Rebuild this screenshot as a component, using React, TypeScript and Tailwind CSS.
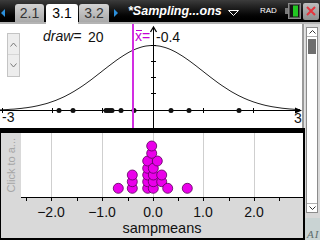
const curve = (() => {
  const pts: string[] = [];
  for (let x = 0; x <= 300; x += 2) {
    const u = (x - 152.5) / 50.2;
    const y = 110.5 - 65 * Math.exp((-u * u) / 2);
    pts.push(`${x},${y.toFixed(1)}`);
  }
  return 'M' + pts.join(' L');
})();

const sampleDots = [59, 73, 106, 108, 110, 112, 121, 134, 171, 189, 239];

const meanDots: [number, number][] = [
  [118.3, 188.3],
  [132.3, 188.3],
  [132.3, 181.7],
  [132.3, 175],
  [147.7, 188.3],
  [147.7, 181.7],
  [147.7, 175],
  [147.7, 168.3],
  [147.7, 161],
  [153.3, 188.3],
  [153.3, 181.7],
  [153.3, 175],
  [153.3, 168.3],
  [157.3, 161],
  [151.7, 153.3],
  [151.7, 146],
  [161.7, 181.7],
  [161.7, 175],
  [167.7, 188.3],
  [187.3, 188.3],
];

const axisLabels: [number, string][] = [
  [51, '\u22122.0'],
  [102, '\u22121.0'],
  [153, '0.0'],
  [203, '1.0'],
  [254, '2.0'],
];

function TopBar() {
  return (
    <div className="h-[24px] flex items-end bg-gradient-to-b from-[#3c3c3c] via-[#141414] to-black border-b-2 border-[#b4b4b4]">
      <div className="w-[15px] shrink-0 self-stretch flex items-center pl-[1px] pt-[4px]">
        <svg width="4" height="8" viewBox="0 0 4 8">
          <polygon points="4,0 0,4 4,8" fill="#2b8fdc" />
        </svg>
      </div>
      <div className="w-[29px] shrink-0 h-[18px] rounded-t-[3px] bg-gradient-to-b from-[#d4d4d4] to-[#a9a9a9] text-[14px] leading-[18px] text-center text-[#333]">
        2.1
      </div>
      <div className="ml-[2px] shrink-0 -mb-[2px] w-[32px] h-[20px] rounded-t-[3px] bg-white text-[14px] leading-[19px] text-center text-black">
        3.1
      </div>
      <div className="ml-[1px] shrink-0 w-[30px] h-[18px] rounded-t-[3px] bg-gradient-to-b from-[#d4d4d4] to-[#a9a9a9] text-[14px] leading-[18px] text-center text-[#333]">
        3.2
      </div>
      <div className="w-[19px] shrink-0 self-stretch flex items-center pl-[5px] pt-[4px]">
        <svg width="4" height="8" viewBox="0 0 4 8">
          <polygon points="0,0 4,4 0,8" fill="#2b8fdc" />
        </svg>
      </div>
      <div className="w-[112px] shrink-0 self-stretch flex items-center">
        <span className="text-white text-[12.5px] font-bold italic whitespace-nowrap">*Sampling...ons</span>
        <svg className="ml-[6px] mt-[3px] shrink-0" width="11" height="6" viewBox="0 0 11 6">
          <polygon points="0.5,0.5 10.5,0.5 5.5,5.5" fill="none" stroke="#ffffff" strokeWidth="1" />
        </svg>
      </div>
      <div className="ml-[20px] self-stretch flex items-center">
        <span className="w-[17px] shrink-0 text-white text-[8px] leading-none whitespace-nowrap">RAD</span>
        <svg className="ml-[8px] shrink-0" width="16" height="16" viewBox="0 0 16 16">
          <rect x="0" y="5" width="3" height="6" fill="#7a7a7a" />
          <rect x="3.5" y="0.5" width="12" height="15" fill="#555" stroke="#8a8a8a" />
          <rect x="5" y="2" width="9" height="12" fill="#151515" />
          <rect x="8" y="2.5" width="5" height="11" fill="#22c622" />
        </svg>
        <div className="ml-[2px] shrink-0 w-[16px] h-[17px] rounded-[2px] bg-gradient-to-b from-[#bdbdbd] to-[#8e8e8e] flex items-center justify-center">
          <svg width="10" height="10" viewBox="0 0 10 10">
            <path d="M1 1 L9 9 M9 1 L1 9" stroke="#e5343c" strokeWidth="2" />
          </svg>
        </div>
      </div>
    </div>
  );
}

function GraphPanel() {
  return (
    <div className="h-[104px] flex">
      <div className="relative w-[302px] h-full bg-white">
        <svg width="302" height="104" viewBox="0 24 302 104" className="block">
          <path d={curve} fill="none" stroke="#222" strokeWidth="1" />
          <line x1="0" y1="110.5" x2="298" y2="110.5" stroke="#000" strokeWidth="1" />
          <polygon points="295,107.5 302,110.5 295,113.5" fill="#000" />
          {[2, 52, 102, 203, 253].map((x) => (
            <line key={x} x1={x + 0.5} y1="108" x2={x + 0.5} y2="113" stroke="#000" strokeWidth="1" />
          ))}
          <line x1="153.5" y1="28" x2="153.5" y2="128" stroke="#000" strokeWidth="1" />
          <polyline points="150.5,32 153.5,27 156.5,32" fill="none" stroke="#000" strokeWidth="1.3" />
          {[45, 61, 77, 93].map((y) => (
            <line key={y} x1="151" y1={y + 0.5} x2="156" y2={y + 0.5} stroke="#000" strokeWidth="1" />
          ))}
          {sampleDots.map((x, i) => (
            <circle key={i} cx={x} cy="110.5" r="2.5" fill="#111" />
          ))}
          <rect x="132" y="24" width="2" height="104" fill="#d22ee2" />
          <text x="43" y="41" fontSize="14" fontStyle="italic" fill="#111">draw=</text>
          <text x="88" y="42" fontSize="14" fill="#111">20</text>
          <text x="135" y="41" fontSize="14" fill="#c400d4">x=</text>
          <line x1="136" y1="30.5" x2="142" y2="30.5" stroke="#c400d4" strokeWidth="1" />
          <text x="156" y="42" fontSize="14" fill="#111">-0.4</text>
          <text x="2" y="122" fontSize="14" fill="#111">-3</text>
          <text x="294" y="123" fontSize="14" fill="#111">3</text>
        </svg>
        <div className="absolute left-[7px] top-[9px] w-[13px] h-[44px] border border-[#c4c4c4] bg-[#ededed] flex flex-col">
          <div className="h-[21px] flex items-center justify-center border-b border-[#d6d6d6]">
            <svg width="7" height="5" viewBox="0 0 7 5">
              <polyline points="0.5,4.5 3.5,1 6.5,4.5" fill="none" stroke="#7a7a7a" strokeWidth="1" />
            </svg>
          </div>
          <div className="flex-1 flex items-center justify-center">
            <svg width="7" height="5" viewBox="0 0 7 5">
              <polyline points="0.5,0.5 3.5,4 6.5,0.5" fill="none" stroke="#7a7a7a" strokeWidth="1" />
            </svg>
          </div>
        </div>
      </div>
      <div className="w-[2px] bg-[#9a9a9a]" />
      <div className="w-[1px] bg-[#e2e2e2]" />
    </div>
  );
}

function DataPanel() {
  return (
    <div className="h-[107px] flex border-l border-r-2 border-b-2 border-black bg-[#d9d9d9]">
      <div className="w-[20px] flex flex-col items-center pt-[5px]">
        <span className="[writing-mode:vertical-rl] rotate-180 text-[11px] leading-none text-[#a6a6a6]">
          Click to a...
        </span>
      </div>
      <svg width="282" height="105" viewBox="21 133 282 105" className="block">
        <rect x="21" y="133" width="282" height="64" fill="#ffffff" />
        {[51, 102, 153, 203, 254].map((x) => (
          <line key={x} x1={x + 0.5} y1="133" x2={x + 0.5} y2="197" stroke="#cfcfcf" strokeWidth="1" />
        ))}
        <line x1="21" y1="197.5" x2="303" y2="197.5" stroke="#000" strokeWidth="1" />
        {[26, 51, 77, 102, 128, 153, 178, 203, 229, 254, 279].map((x) => (
          <line key={x} x1={x + 0.5} y1="197" x2={x + 0.5} y2="201" stroke="#000" strokeWidth="1" />
        ))}
        {meanDots.map(([x, y], i) => (
          <circle key={i} cx={x} cy={y} r="5" fill="#ea00ea" stroke="#5a005a" strokeWidth="0.8" />
        ))}
        {axisLabels.map(([x, t]) => (
          <text key={x} x={x} y="216.5" fontSize="14" textAnchor="middle" fill="#111">
            {t}
          </text>
        ))}
        <text x="162" y="232.5" fontSize="14.5" textAnchor="middle" fill="#111">
          sampmeans
        </text>
      </svg>
    </div>
  );
}

function ScrollColumn() {
  return (
    <div className="w-[15px] bg-[#d8d8d8] flex flex-col">
      <div className="ml-[1px] mt-[3px] w-[12px] h-[186px] border border-[#8c8c8c] bg-white flex flex-col">
        <div className="h-[9px] border-b border-[#b0b0b0] flex items-center justify-center">
          <svg width="7" height="4" viewBox="0 0 7 4">
            <polyline points="0.5,3.5 3.5,0.5 6.5,3.5" fill="none" stroke="#333" strokeWidth="1" />
          </svg>
        </div>
        <div className="mt-[2px] mx-[1px] h-[15px] bg-[#6e6e6e]" />
        <div className="flex-1" />
        <div className="h-[9px] border-t border-[#b0b0b0] flex items-center justify-center">
          <svg width="7" height="4" viewBox="0 0 7 4">
            <polyline points="0.5,0.5 3.5,3.5 6.5,0.5" fill="none" stroke="#333" strokeWidth="1" />
          </svg>
        </div>
      </div>
      <div className="mt-auto h-[22px] bg-[#c9d3d3] pl-[2px] pt-[3px]">
        <span className="font-['Liberation_Serif',serif] italic text-[11px] text-[#5f6e6e] tracking-[1px]">AI</span>
      </div>
    </div>
  );
}

export default function App() {
  return (
    <div className="w-[320px] h-[240px] overflow-hidden bg-white flex flex-col font-['Liberation_Sans',Arial,sans-serif] select-none">
      <TopBar />
      <div className="flex flex-1 min-h-0">
        <div className="w-[305px] flex flex-col">
          <GraphPanel />
          <div className="h-[5px] bg-black" />
          <DataPanel />
        </div>
        <ScrollColumn />
      </div>
    </div>
  );
}
